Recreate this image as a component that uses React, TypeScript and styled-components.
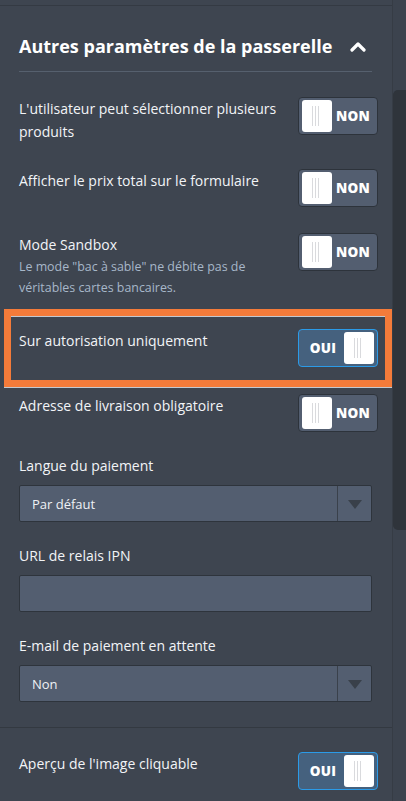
import React from 'react';
import styled, { createGlobalStyle } from 'styled-components';

const Global = createGlobalStyle`
  html, body { margin: 0; padding: 0; background: #3e4550; }
  body { font-family: "Open Sans", "Noto Sans", sans-serif; -webkit-font-smoothing: antialiased; }
  * { box-sizing: border-box; }
`;

const Page = styled.div`
  display: flex;
  width: 406px;
  height: 801px;
  overflow: hidden;
  background: #3e4550;
`;

const Panel = styled.div`
  flex: 1;
  min-width: 0;
  display: flex;
  flex-direction: column;
`;

const TopEdge = styled.div`
  height: 6px;
  border-bottom: 1px solid #343a43;
`;

const Section = styled.div<{ $rule?: boolean; $bottom?: number }>`
  display: flex;
  flex-direction: column;
  padding: 0 20px ${p => p.$bottom ?? 0}px 19px;
  border-top: ${p => (p.$rule ? '1px solid #333941' : 'none')};
`;

const Header = styled.div`
  display: flex;
  align-items: center;
  justify-content: space-between;
  height: 66px;
  padding-top: 15px;
  border-bottom: 1px solid #56606e;
`;

const Title = styled.h2`
  margin: 0;
  font-size: 18px;
  font-weight: 700;
  color: #ffffff;
`;

const Chevron = styled.svg`
  width: 18px;
  height: 12px;
  margin-right: 5px;
`;

const Row = styled.div<{ $mt?: number }>`
  display: flex;
  justify-content: space-between;
  align-items: flex-start;
  gap: 10px;
  margin-top: ${p => p.$mt ?? 26}px;
  margin-right: -6px;
`;

const LabelBlock = styled.div`
  flex: 1;
  min-width: 0;
  max-width: 270px;
`;

const Label = styled.div`
  font-size: 14px;
  line-height: 23px;
  color: #f2f4f7;
`;

const Hint = styled.div`
  font-size: 12.4px;
  line-height: 21px;
  color: #a7b7c9;
`;

const Highlight = styled.div`
  margin: 11px -20px 0 -15px;
  border: 7px solid #f47b3a;
`;

const HighlightRow = styled.div`
  display: flex;
  justify-content: space-between;
  align-items: flex-start;
  border-top: 1px solid #c4c9d0;
  padding: 12px 7px 13px 8px;
`;

const LightRule = styled.div`
  height: 1px;
  margin: 0 -20px 0 -15px;
  background: #c4c9d0;
`;

const Toggle = styled.div<{ $on: boolean }>`
  flex: none;
  width: 80px;
  height: 38px;
  border-radius: 4px;
  border: 1px solid ${p => (p.$on ? '#2b9be8' : '#2d333b')};
  background: ${p => (p.$on ? '#45617e' : '#535e70')};
  padding: 0 3px;
  display: flex;
  align-items: center;
  flex-direction: ${p => (p.$on ? 'row-reverse' : 'row')};
`;

const Knob = styled.div`
  width: 30px;
  height: 32px;
  border-radius: 3px;
  background: #ffffff;
  display: flex;
  justify-content: center;
  align-items: center;
  gap: 2px;
  padding-right: 3px;
`;

const Grip = styled.span`
  width: 1px;
  height: 20px;
  background: #d9dadd;
`;

const ToggleText = styled.span`
  flex: 1;
  text-align: center;
  font-size: 13.5px;
  font-weight: 800;
  color: #ffffff;
  letter-spacing: 0.3px;
`;

const FieldLabel = styled.div`
  margin-top: 22px;
  font-size: 14px;
  line-height: 23px;
  color: #f2f4f7;
`;

const Box = styled.div`
  margin-top: 8px;
  height: 37px;
  display: flex;
  align-items: stretch;
  border: 1px solid #2e343c;
  border-radius: 2px;
  background: #535e70;
`;

const Value = styled.div`
  flex: 1;
  display: flex;
  align-items: center;
  padding-left: 12px;
  font-size: 13px;
  font-weight: 500;
  color: #eef1f5;
`;

const ArrowBox = styled.div`
  width: 34px;
  border-left: 1px solid #3a414b;
  display: flex;
  align-items: center;
  justify-content: center;
`;

const Caret = styled.span`
  width: 0;
  height: 0;
  border-left: 7px solid transparent;
  border-right: 7px solid transparent;
  border-top: 9px solid #39404a;
  margin-top: 1px;
`;

const Spacer = styled.div`
  height: 25px;
`;

const ScrollTrack = styled.div`
  width: 14px;
  flex: none;
  border-left: 1px solid #363c45;
  background: #3c434e;
  padding-top: 90px;
`;

const Thumb = styled.div`
  height: 440px;
  background: #2f343b;
  border-radius: 5px 0 0 5px;
`;

function Switch({ on }: { on: boolean }) {
  return (
    <Toggle $on={on}>
      <Knob>
        <Grip />
        <Grip />
        <Grip />
      </Knob>
      <ToggleText>{on ? 'OUI' : 'NON'}</ToggleText>
    </Toggle>
  );
}

function Select({ value }: { value: string }) {
  return (
    <Box>
      <Value>{value}</Value>
      <ArrowBox>
        <Caret />
      </ArrowBox>
    </Box>
  );
}

export default function App() {
  return (
    <Page>
      <Global />
      <Panel>
        <TopEdge />
        <Section>
          <Header>
            <Title>Autres paramètres de la passerelle</Title>
            <Chevron viewBox="0 0 18 12">
              <polyline points="3,10 9,4 15,10" fill="none" stroke="#ffffff" strokeWidth="3.2" strokeLinecap="round" strokeLinejoin="round" />
            </Chevron>
          </Header>

          <Row $mt={25}>
            <LabelBlock>
              <Label>L'utilisateur peut sélectionner plusieurs produits</Label>
            </LabelBlock>
            <Switch on={false} />
          </Row>

          <Row>
            <LabelBlock>
              <Label>Afficher le prix total sur le formulaire</Label>
            </LabelBlock>
            <Switch on={false} />
          </Row>

          <Row>
            <LabelBlock>
              <Label>Mode Sandbox</Label>
              <Hint>Le mode "bac à sable" ne débite pas de véritables cartes bancaires.</Hint>
            </LabelBlock>
            <Switch on={false} />
          </Row>

          <Highlight>
            <HighlightRow>
              <Label>Sur autorisation uniquement</Label>
              <Switch on={true} />
            </HighlightRow>
          </Highlight>
          <LightRule />

          <Row $mt={6}>
            <LabelBlock>
              <Label>Adresse de livraison obligatoire</Label>
            </LabelBlock>
            <Switch on={false} />
          </Row>

          <FieldLabel>Langue du paiement</FieldLabel>
          <Select value="Par défaut" />

          <FieldLabel>URL de relais IPN</FieldLabel>
          <Box />

          <FieldLabel>E-mail de paiement en attente</FieldLabel>
          <Select value="Non" />
          <Spacer />
        </Section>

        <Section $rule>
          <Row $mt={24}>
            <LabelBlock>
              <Label>Aperçu de l'image cliquable</Label>
            </LabelBlock>
            <Switch on={true} />
          </Row>
        </Section>
      </Panel>
      <ScrollTrack>
        <Thumb />
      </ScrollTrack>
    </Page>
  );
}
